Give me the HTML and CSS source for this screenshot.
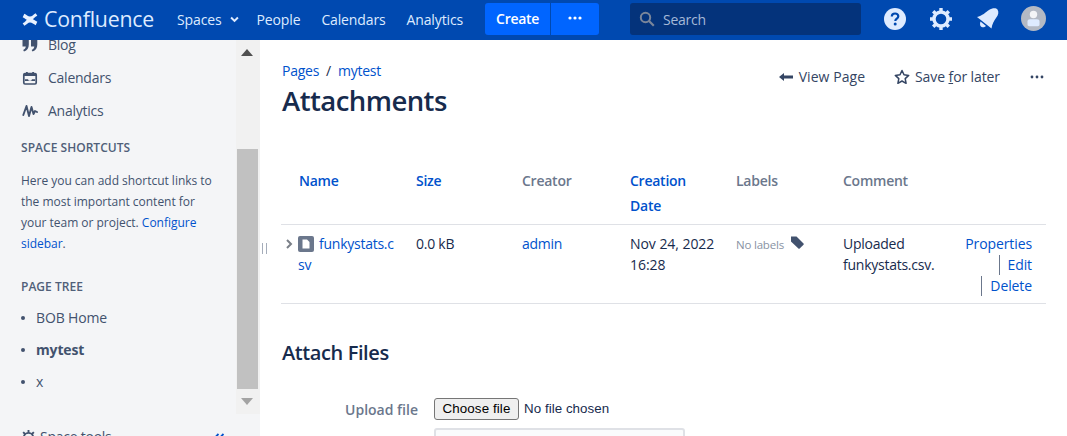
FILE: index.html
```html
<!DOCTYPE html>
<html lang="en">
<head>
<meta charset="utf-8">
<title>Attachments - Confluence</title>
<link rel="stylesheet" href="styles.css">
</head>
<body>
<header class="topbar">
  <a class="logo">
    <svg class="logo-mark" viewBox="0 0 24 20" width="16" height="15"><path d="M1 15.500c4-1 6-7 11-7s7 3 11 5l-2.500 5c-3-1.500-5.500-4-8.500-4s-5 3-8.500 5zM23 4.500c-4 1-6 7-11 7s-7-3-11-5l2.500-5c3 1.500 5.500 4 8.500 4s5-3 8.500-5z" fill="#e9f2ff"/></svg>
    <span class="logo-text">Confluence</span>
  </a>
  <nav class="topnav">
    <a class="topnav-item spaces">Spaces
      <svg viewBox="0 0 10 7" width="9" height="7"><path d="M1.200 1.200L5 5l3.800-3.800" fill="none" stroke="#deebff" stroke-width="2.200"/></svg>
    </a>
    <a class="topnav-item">People</a>
    <a class="topnav-item">Calendars</a>
    <a class="topnav-item">Analytics</a>
  </nav>
  <div class="create-group">
    <button class="create">Create</button>
    <button class="create-more"><svg viewBox="0 0 14 4" width="14" height="4"><circle cx="2" cy="2" r="1.600" fill="#fff"/><circle cx="7" cy="2" r="1.600" fill="#fff"/><circle cx="12" cy="2" r="1.600" fill="#fff"/></svg></button>
  </div>
  <div class="search">
    <svg viewBox="0 0 16 16" width="16" height="16"><circle cx="6.500" cy="6.500" r="4.700" fill="none" stroke="#7a869a" stroke-width="2"/><path d="M10 10l4.800 4.800" stroke="#7a869a" stroke-width="2.200"/></svg>
    <span>Search</span>
  </div>
  <div class="top-icons">
    <svg class="i-help" viewBox="0 0 22 22" width="22" height="22"><circle cx="11" cy="11" r="11" fill="#deebff"/><path d="M7.800 8.600c0-2 1.400-3.100 3.300-3.100s3.200 1.100 3.200 2.800c0 2.400-3 2.300-3 4.800" fill="none" stroke="#0049b0" stroke-width="2.200"/><circle cx="11.200" cy="16" r="1.500" fill="#0049b0"/></svg>
    <svg class="i-gear" viewBox="0 0 22 22" width="22" height="22"><circle cx="11" cy="11" r="7" fill="none" stroke="#deebff" stroke-width="3.400"/><path d="M11 0v4M11 18v4M0 11h4M18 11h4M3.200 3.200l2.800 2.800M16 16l2.800 2.800M3.200 18.800L6 16M16 6l2.800-2.800" stroke="#deebff" stroke-width="3.400"/></svg>
    <svg class="i-bell" viewBox="0 0 24 24" width="24" height="24"><path d="M0 10C5 9 9 5 12 3c3-2 7-2.500 8.500-.5 1.500 2.500 1 5.500-1.500 8.500-2 3-4 6-4.500 10.500z" fill="#deebff"/><path d="M3.500 14.500L9 19c-2 2-4.500 1.500-5.500 0-.7-1.500-.5-3 0-4.500z" fill="#deebff"/></svg>
    <svg class="i-avatar" viewBox="0 0 25 25" width="25" height="25"><circle cx="12.500" cy="12.500" r="12.500" fill="#b3b9c4"/><circle cx="12.500" cy="8.500" r="3.700" fill="#f4f5f7"/><path d="M6.500 15.500c0-1.500 1-2.300 2.500-2.300h7c1.500 0 2.500.8 2.500 2.300v3c0 1-.8 1.700-1.700 1.700H8.200c-1 0-1.700-.7-1.700-1.700z" fill="#deebff"/></svg>
  </div>
</header>
<div class="layout">
  <aside class="sidebar">
    <div class="side-scroll">
      <div class="side-content">
        <ul class="side-nav">
          <li><svg viewBox="0 0 16 16" width="16" height="16"><path d="M.5 2.500h6.300v5c0 3.500-1.600 6-4.800 7l-.8-1.400c1.700-.8 2.500-2 2.600-3.500H.5zM9 2.500h6.300v5c0 3.500-1.600 6-4.800 7l-.8-1.400c1.700-.8 2.500-2 2.600-3.500H9z" fill="#42526e"/></svg>Blog</li>
          <li><svg viewBox="0 0 16 16" width="16" height="16"><path d="M3 3.500h10A1.200 1.200 0 0 1 14.200 4.700v8.100A1.200 1.200 0 0 1 13 14H3a1.200 1.200 0 0 1-1.200-1.200V4.700A1.200 1.200 0 0 1 3 3.500z" fill="none" stroke="#42526e" stroke-width="1.700"/><path d="M2 3.500h12v2.500H2zM4 2h1.800v2.500H4zM10.200 2H12v2.500h-1.800zM3 9.300h3l.8 1.500h2.400l.8-1.500h3v1.800H3z" fill="#42526e"/></svg>Calendars</li>
          <li><svg viewBox="0 0 16 16" width="16" height="16"><path d="M1.300 12L4.500 3l2.500 10 2.500-9 2 7 1.500-3 2 1" fill="none" stroke="#42526e" stroke-width="1.900" stroke-linecap="round" stroke-linejoin="round"/></svg>Analytics</li>
        </ul>
        <h5 class="side-heading">SPACE SHORTCUTS</h5>
        <p class="side-text">Here you can add shortcut links to the most important content for your team or project. <a>Configure sidebar</a>.</p>
        <h5 class="side-heading tree-heading">PAGE TREE</h5>
        <ul class="tree">
          <li>BOB Home</li>
          <li class="current">mytest</li>
          <li>x</li>
        </ul>
      </div>
      <div class="scrollbar">
        <button class="scroll-btn"><svg viewBox="0 0 12 7" width="12" height="7"><path d="M0 7L6 0l6 7z" fill="#505050"/></svg></button>
        <div class="scroll-track"><div class="scroll-thumb"></div></div>
        <button class="scroll-btn"><svg viewBox="0 0 12 7" width="12" height="7"><path d="M0 0h12L6 7z" fill="#a3a3a3"/></svg></button>
      </div>
    </div>
    <div class="side-footer">
      <span class="tools"><svg viewBox="0 0 16 16" width="15" height="15"><circle cx="8" cy="8" r="5" fill="none" stroke="#42526e" stroke-width="2"/><path d="M8 0v3M8 13v3M0 8h3M13 8h3M2.300 2.300l2 2M11.700 11.700l2 2M2.300 13.700l2-2M11.700 4.300l2-2" stroke="#42526e" stroke-width="2"/></svg>Space tools</span>
      <svg class="collapse" viewBox="0 0 12 10" width="12" height="10"><path d="M5.500 1L1.500 5l4 4M10.500 1l-4 4 4 4" fill="none" stroke="#0052cc" stroke-width="1.800"/></svg>
    </div>
    <div class="grip"></div>
  </aside>
  <main class="content">
    <div class="page-head">
      <div>
        <div class="breadcrumbs"><a>Pages</a><span>/</span><a>mytest</a></div>
        <h1>Attachments</h1>
      </div>
      <div class="page-actions">
        <a class="action view"><svg viewBox="0 0 14 10" width="14" height="10"><path d="M0 5l5-4v2.500h9v3H5V9z" fill="#344563"/></svg>View Page</a>
        <a class="action save"><svg viewBox="0 0 16 16" width="16" height="16"><path d="M8 1.500l2 4.300 4.700.6-3.500 3.200.9 4.700L8 12l-4.100 2.300.9-4.700L1.300 6.400 6 5.800z" fill="none" stroke="#344563" stroke-width="1.500" stroke-linejoin="round"/></svg><span>Save <u>f</u>or later</span></a>
        <a class="more"><svg viewBox="0 0 14 4" width="14" height="4"><circle cx="2" cy="2" r="1.400" fill="#344563"/><circle cx="7" cy="2" r="1.400" fill="#344563"/><circle cx="12" cy="2" r="1.400" fill="#344563"/></svg></a>
      </div>
    </div>
    <table class="attachments">
      <thead>
        <tr>
          <th class="c-name"><a>Name</a></th>
          <th class="c-size"><a>Size</a></th>
          <th class="c-creator">Creator</th>
          <th class="c-date"><a>Creation Date</a></th>
          <th class="c-labels">Labels</th>
          <th class="c-comment">Comment</th>
          <th class="c-actions"></th>
        </tr>
      </thead>
      <tbody>
        <tr>
          <td class="c-name">
            <svg class="twisty" viewBox="0 0 7 10" width="7" height="10"><path d="M1 1l4 4-4 4" fill="none" stroke="#7a7f87" stroke-width="2"/></svg>
            <svg class="file" viewBox="0 0 16 16" width="16" height="16"><rect width="16" height="16" rx="2" fill="#6b778c"/><path d="M4.500 3.500h4.500l2.500 2.500v6.500h-7z" fill="#fff"/></svg><a class="file-link">funkystats.csv</a>
          </td>
          <td>0.0 kB</td>
          <td><a>admin</a></td>
          <td class="date">Nov 24, 2022 16:28</td>
          <td class="labels"><span>No labels</span><svg viewBox="0 0 14 14" width="14" height="14"><path d="M1 1.500h5.500L13.500 8.500a1 1 0 0 1 0 1.300l-3.800 3.700a1 1 0 0 1-1.300 0L1 6.500z" fill="#42526e"/></svg></td>
          <td>Uploaded funkystats.csv.</td>
          <td class="row-actions"><a>Properties</a><a class="sep">Edit</a><a class="sep">Delete</a></td>
        </tr>
      </tbody>
    </table>
    <h2>Attach Files</h2>
    <div class="form-row">
      <label class="form-label">Upload file</label>
      <div class="form-fields">
        <div class="file-input"><button class="choose">Choose file</button><span>No file chosen</span></div>
        <div class="comment-input"></div>
      </div>
    </div>
  </main>
</div>
</body>
</html>
```
FILE: styles.css
```css
* { box-sizing: border-box; }
html, body { height: 100%; }
body {
  margin: 0;
  overflow: hidden;
  display: flex;
  flex-direction: column;
  font-family: "Open Sans", "Noto Sans", sans-serif;
  font-size: 14px;
  letter-spacing: -0.25px;
  color: #172b4d;
  background: #fff;
}
a { color: #0052cc; }
button { font-family: inherit; border: 0; padding: 0; }
ul { list-style: none; margin: 0; padding: 0; }

.topbar {
  flex: none;
  height: 40px;
  display: flex;
  align-items: center;
  background: #0049b0;
  color: #deebff;
}
.logo { display: flex; align-items: center; margin-left: 22px; margin-top: -2px; color: #deebff; }
.logo-mark { margin-right: 6px; }
.logo-text { font-size: 21.3px; letter-spacing: -0.2px; line-height: 36px; width: 110px; }
.topnav { display: flex; align-items: center; margin-left: 23px; margin-top: -2px; letter-spacing: -0.13px; }
.topnav a { color: #deebff; }
.topnav-item { margin-right: 21px; }
.topnav .spaces { display: flex; align-items: center; gap: 9px; margin-right: 17px; }
.create-group { display: flex; height: 32px; margin-left: 1px; border-radius: 3px; overflow: hidden; margin-top: -2px; }
.create, .create-more { background: #0065ff; color: #fff; height: 32px; }
.create { width: 66px; padding-bottom: 2px; font-weight: 600; font-size: 14px; letter-spacing: -0.3px; border-right: 1px solid #0049b0; }
.create-more { width: 48px; padding-bottom: 2px; display: flex; align-items: center; justify-content: center; }
.search {
  width: 231px;
  height: 32px;
  margin-left: 31px;
  margin-top: -2px;
  padding-left: 9px;
  display: flex;
  align-items: center;
  gap: 8px;
  border-radius: 3px;
  background: #04337b;
  color: #a5b9d8;
}
.top-icons { display: flex; align-items: center; margin-left: 23px; margin-top: -3px; }
.i-help { margin-right: 24px; }
.i-gear { margin-right: 25px; }
.i-bell { margin-right: 20px; }

.layout { flex: 1; min-height: 0; display: flex; }
.sidebar {
  position: relative;
  flex: none;
  width: 260px;
  display: flex;
  flex-direction: column;
  background: #f4f5f7;
  color: #42526e;
}
.side-scroll { flex: none; height: 374px; display: flex; overflow: hidden; }
.side-content { flex: 1; min-width: 0; padding: 0 19px 0 21px; margin-top: -12px; }
.side-nav li { display: flex; align-items: center; height: 33px; gap: 10px; }
.side-nav svg { flex: none; margin-left: 1px; }
.side-heading { margin: 11px 0 0; font-size: 12px; font-weight: 600; line-height: 20px; letter-spacing: 0.03px; color: #505f79; }
.tree-heading { margin-top: 23px; }
.side-text { margin: 12px 0 0; font-size: 12px; line-height: 21px; letter-spacing: -0.02px; color: #42526e; }
.tree { margin-top: 5px; }
.tree li { position: relative; height: 32px; line-height: 32px; padding-left: 15px; letter-spacing: -0.15px; }
.tree li::before { content: ""; position: absolute; left: 0; top: 14px; width: 4px; height: 4px; border-radius: 50%; background: #42526e; }
.tree .current { font-weight: 700; }

.scrollbar { flex: none; width: 24px; display: flex; flex-direction: column; background: #f1f1f1; padding-right: 2px; }
.scroll-btn { flex: none; height: 25px; display: flex; align-items: center; justify-content: center; background: transparent; }
.scroll-track { flex: 1; min-height: 0; padding-top: 84px; }
.scroll-thumb { height: 240px; margin-left: 1px; background: #c1c1c1; }

.side-footer { flex: 1; display: flex; align-items: flex-start; padding: 14px 35px 0 21px; justify-content: space-between; }
.tools { display: flex; align-items: center; gap: 4px; color: #42526e; line-height: 18px; }
.collapse { margin-top: 5px; }
.grip { position: absolute; top: 203px; right: -7px; width: 5px; height: 11px; border-left: 1px solid #a5adba; border-right: 1px solid #a5adba; }

.content { flex: 1; min-width: 0; padding: 21px 22px 0 22px; overflow: hidden; }
.page-head { display: flex; justify-content: space-between; align-items: flex-start; }
.breadcrumbs { display: flex; gap: 7px; line-height: 20px; }
h1 { margin: 2px 0 0; font-size: 27.5px; font-weight: 600; line-height: 36px; letter-spacing: -0.55px; color: #172b4d; }
.page-actions { display: flex; align-items: center; margin-top: 6px; color: #344563; letter-spacing: -0.1px; }
.action { display: flex; align-items: center; color: #344563; line-height: 20px; }
.view { gap: 6px; margin-right: 29px; letter-spacing: 0.05px; }
.save { gap: 5px; margin-right: 30px; }
.more { display: flex; margin-right: 1px; }

.attachments { width: calc(100% + 2px); margin: 49px -1px 0; border-collapse: collapse; table-layout: fixed; }
.attachments th { height: 56px; padding: 0 7px 0 17px; text-align: left; vertical-align: top; font-weight: 600; line-height: 25px; color: #6b778c; }
.attachments th.c-name { padding-left: 18px; }
.attachments thead tr { border-bottom: 1px solid #dfe1e6; }
.attachments tbody tr { border-bottom: 1px solid #dfe1e6; }
.attachments td { height: 79px; padding: 8px 7px 0 17px; vertical-align: top; line-height: 21px; color: #172b4d; }
.c-name { width: 118px; }
.c-size { width: 106px; }
.c-creator { width: 108px; }
.c-date { width: 106px; }
.c-labels { width: 107px; }
.c-comment { width: 124px; }
.attachments td.c-name { position: relative; padding-right: 0; word-break: break-all; }
.twisty { position: absolute; left: 5px; top: 14px; }
.file { vertical-align: -3px; margin-right: 5px; }
.attachments td.date { letter-spacing: -0.05px; padding-right: 0; }
.labels span { font-size: 11.5px; color: #8993a4; letter-spacing: -0.2px; }
.labels svg { margin-left: 6px; vertical-align: 0; }
.attachments td.row-actions { text-align: right; padding-right: 14px; padding-left: 0; letter-spacing: -0.1px; }
.row-actions a { display: block; }
.row-actions a.sep::before { content: ""; display: inline-block; width: 1px; height: 20px; background: #6b778c; margin-right: 8px; vertical-align: -5px; }

h2 { margin: 37px 0 0; font-size: 20px; font-weight: 600; line-height: 24px; letter-spacing: -0.4px; color: #172b4d; }
.form-row { display: flex; margin-top: 32px; }
.form-label { width: 136px; text-align: right; font-weight: 600; line-height: 24px; letter-spacing: 0; color: #6b778c; margin-top: 1px; }
.form-fields { margin-left: 16px; padding-top: 1px; }
.file-input { display: flex; align-items: center; gap: 5px; height: 22px; font-family: "Liberation Sans", Arial, sans-serif; font-size: 13.333px; letter-spacing: 0.05px; color: #172b4d; }
.choose { width: 85px; height: 22px; border: 1px solid #767676; border-radius: 3px; background: #efefef; color: #000; font-family: "Liberation Sans", Arial, sans-serif; font-size: 13.333px; letter-spacing: 0.1px; }
.comment-input { width: 251px; height: 30px; margin-top: 8px; border: 2px solid #dfe1e6; border-radius: 3px; background: #fafbfc; }
```
